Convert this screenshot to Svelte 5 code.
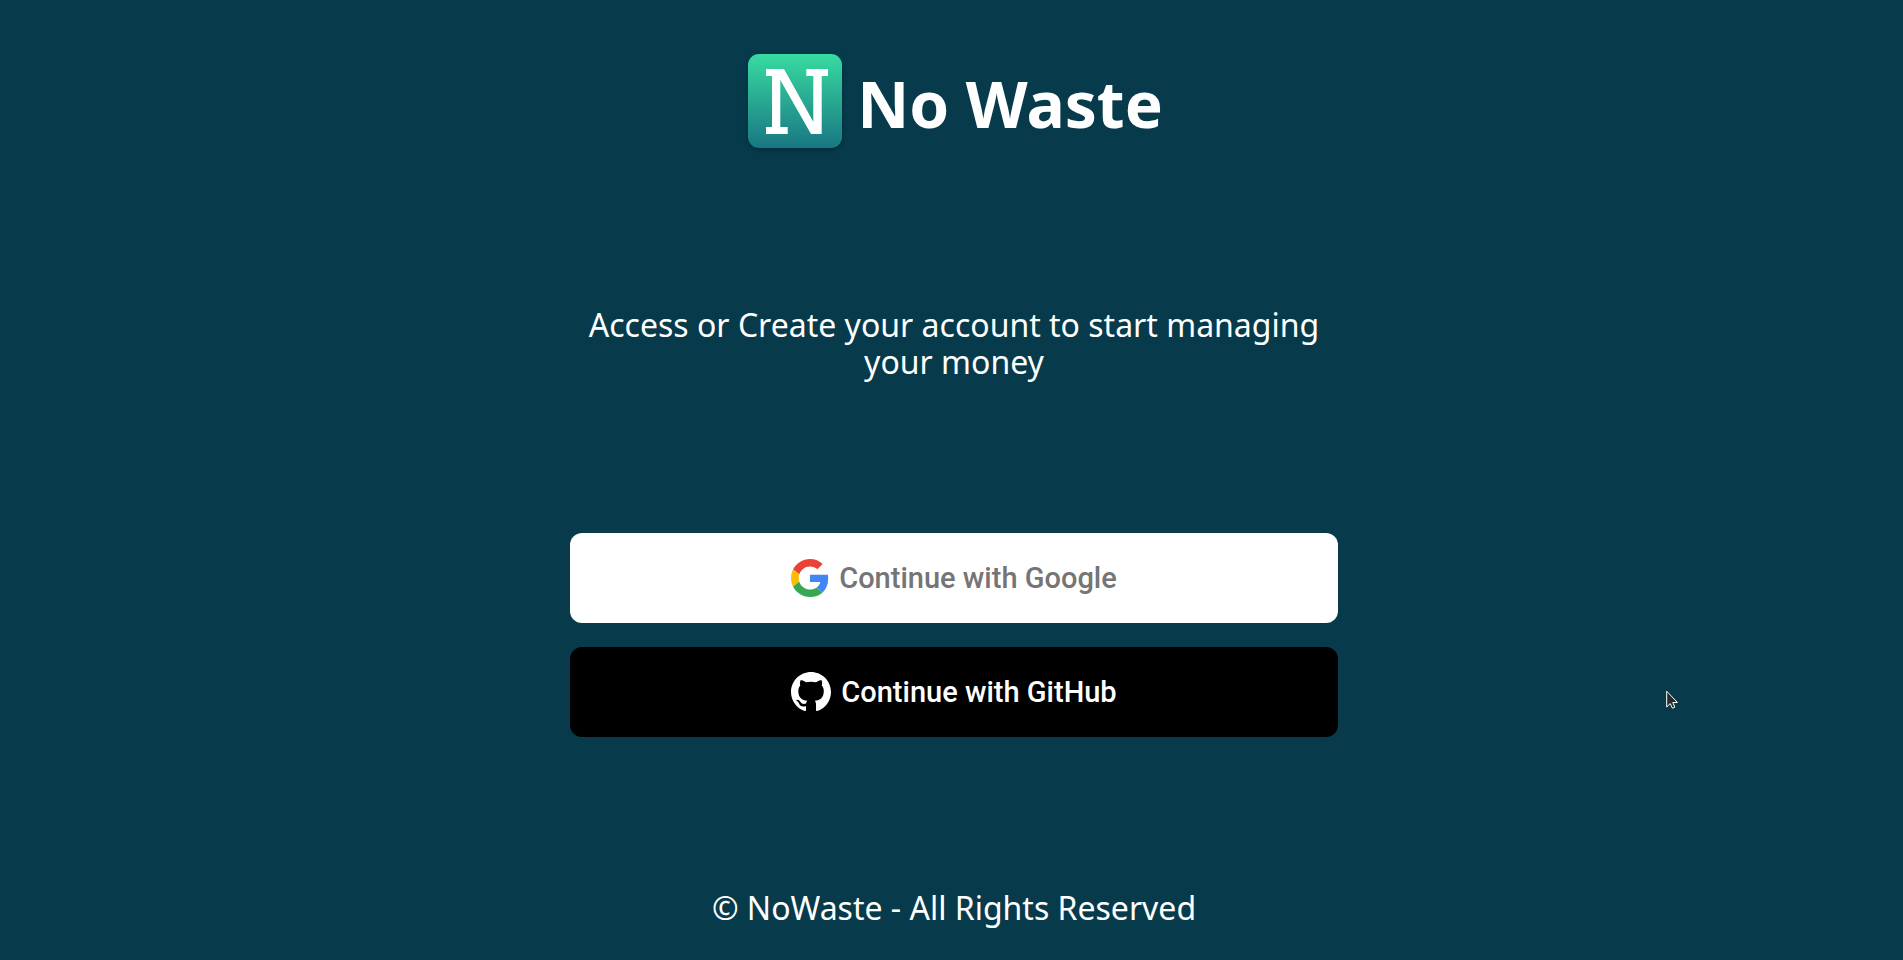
<script>
  const brand = 'No Waste';
</script>

<main class="page">
  <header class="brand">
    <svg class="mark" viewBox="0 0 94 94" aria-hidden="true">
      <defs>
        <linearGradient id="mark-fill" x1="0" y1="0" x2="0" y2="1">
          <stop offset="0" stop-color="#38dba1" />
          <stop offset="1" stop-color="#187782" />
        </linearGradient>
      </defs>
      <rect width="94" height="94" rx="11" fill="url(#mark-fill)" />
      <g fill="#fff">
        <rect x="18" y="15" width="14" height="7" />
        <rect x="24" y="15" width="8.3" height="65" />
        <rect x="18" y="73" width="21.7" height="7" />
        <rect x="65.3" y="15" width="8.4" height="65" />
        <rect x="58.3" y="15" width="21.7" height="7" />
        <path d="M30 15H36L65.3 67.7H68V80H63L32.3 26H30Z" />
      </g>
    </svg>
    <h1>{brand}</h1>
  </header>

  <p class="intro">Access or Create your account to start managing your money</p>

  <div class="providers">
    <button type="button" class="provider google">
      <svg class="google-icon" viewBox="0 0 48 48" aria-hidden="true">
        <path fill="#EA4335" d="M24 9.5c3.54 0 6.71 1.22 9.21 3.6l6.85-6.85C35.9 2.38 30.47 0 24 0 14.62 0 6.51 5.38 2.56 13.22l7.98 6.19C12.43 13.72 17.74 9.5 24 9.5z" />
        <path fill="#4285F4" d="M46.98 24.55c0-1.57-.15-3.09-.38-4.55H24v9.02h12.94c-.58 2.96-2.26 5.48-4.78 7.18l7.73 6c4.51-4.18 7.09-10.36 7.09-17.65z" />
        <path fill="#FBBC05" d="M10.53 28.59c-.48-1.45-.76-2.99-.76-4.59s.27-3.14.76-4.59l-7.98-6.19C.92 16.46 0 20.12 0 24c0 3.88.92 7.54 2.56 10.78l7.97-6.19z" />
        <path fill="#34A853" d="M24 48c6.48 0 11.93-2.13 15.89-5.81l-7.73-6c-2.15 1.45-4.92 2.3-8.16 2.3-6.26 0-11.57-4.22-13.47-9.91l-7.98 6.19C6.51 42.62 14.62 48 24 48z" />
      </svg>
      <span>Continue with Google</span>
    </button>
    <button type="button" class="provider github">
      <svg class="github-icon" viewBox="0 0 16 16" aria-hidden="true">
        <path fill="#fff" d="M8 0C3.58 0 0 3.58 0 8c0 3.54 2.29 6.53 5.47 7.59.4.07.55-.17.55-.38 0-.19-.01-.82-.01-1.49-2.01.37-2.53-.49-2.69-.94-.09-.23-.48-.94-.82-1.13-.28-.15-.68-.52-.01-.53.63-.01 1.08.58 1.23.82.72 1.21 1.87.87 2.33.66.07-.52.28-.87.51-1.07-1.78-.2-3.64-.89-3.64-3.95 0-.87.31-1.59.82-2.15-.08-.2-.36-1.02.08-2.12 0 0 .67-.21 2.2.82.64-.18 1.32-.27 2-.27s1.36.09 2 .27c1.53-1.04 2.2-.82 2.2-.82.44 1.1.16 1.92.08 2.12.51.56.82 1.27.82 2.15 0 3.07-1.87 3.75-3.65 3.95.29.25.54.73.54 1.48 0 1.07-.01 1.93-.01 2.2 0 .21.15.46.55.38A8.01 8.01 0 0 0 16 8c0-4.42-3.58-8-8-8z" />
      </svg>
      <span>Continue with GitHub</span>
    </button>
  </div>

  <footer>© NoWaste - All Rights Reserved</footer>

  <svg class="pointer" viewBox="0 0 12 19" aria-hidden="true">
    <path d="M.7 1.2V17L4.2 13.6L6.4 18.2L8.8 17.2L6.8 12.5H11.4Z" fill="#2c2a2d" stroke="#fff" />
  </svg>
</main>

<style>
  :global(body) {
    margin: 0;
    background: #073b4c;
  }

  .page {
    position: relative;
    box-sizing: border-box;
    min-height: 100vh;
    padding: 54px 0 34px 5px;
    display: flex;
    flex-direction: column;
    align-items: center;
    justify-content: space-between;
    background: #073b4c;
    color: #fff;
    font-family: 'Noto Sans', sans-serif;
    font-size: 32px;
    line-height: 37px;
    text-align: center;
  }

  .brand {
    display: flex;
    align-items: center;
    gap: 15px;
    padding: 0 0 6px 3px;
  }

  .mark {
    width: 94px;
    height: 94px;
    filter: drop-shadow(0 2px 2px rgba(0, 0, 0, 0.3));
  }

  h1 {
    margin: 0;
    padding-top: 6px;
    font-size: 64px;
    font-weight: 700;
    line-height: 74px;
  }

  .intro {
    max-width: 768px;
    margin: 0;
  }

  .providers {
    display: flex;
    flex-direction: column;
    gap: 24px;
    width: 100%;
    max-width: 768px;
  }

  .provider {
    display: flex;
    align-items: center;
    justify-content: center;
    gap: 10px;
    height: 90px;
    padding: 0;
    border: 0;
    border-radius: 12px;
    font-family: Roboto, sans-serif;
    font-size: 29px;
    font-weight: 500;
    cursor: pointer;
  }

  .google {
    background: #fff;
    color: #757575;
  }

  .github {
    background: #000;
    color: #fff;
  }

  .google-icon {
    width: 38px;
    height: 38px;
  }

  .github-icon {
    width: 40px;
    height: 40px;
  }

  .pointer {
    position: absolute;
    left: 1666px;
    top: 690px;
    width: 12px;
    height: 19px;
    pointer-events: none;
  }
</style>
